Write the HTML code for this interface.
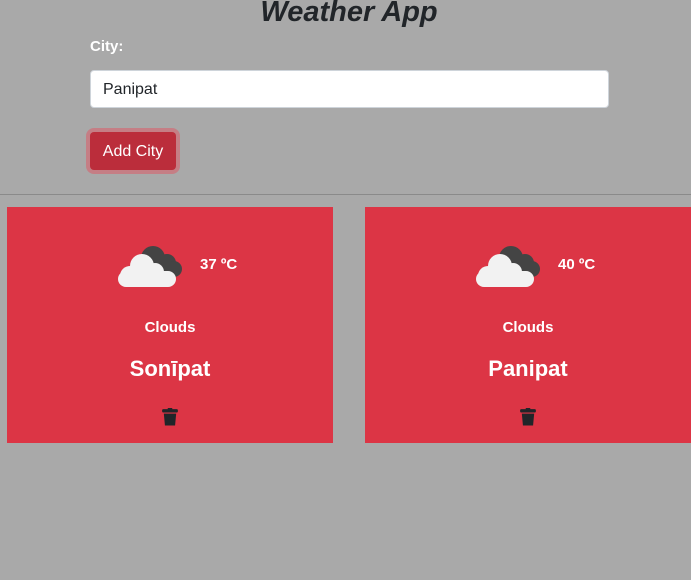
<!DOCTYPE html>
<html><head><style>
body{margin:0;width:691px;height:580px;background:#a9a9a9;font-family:"Liberation Sans",sans-serif;position:relative;overflow:hidden}
.a{position:absolute}
h1{position:absolute;margin:0;left:0;width:698px;text-align:center;top:-4px;font-size:29px;font-style:italic;font-weight:bold;color:#212529}
.lab{left:90px;top:38px;color:#fff;font-weight:bold;font-size:15px}
.inp{left:90px;top:70px;background:#fff;border:1px solid #ced4da;border-radius:4px;font-size:16px;color:#212529;line-height:38px;padding-left:12px;box-sizing:border-box;width:519px;height:38px}
.btn{left:90px;top:132px;width:86px;height:38px;background:#bb2d3b;border-radius:4px;color:#fff;font-size:16px;line-height:40px;text-align:center;box-shadow:0 0 0 4px rgba(225,83,97,.5)}
.hr{left:0;top:194px;width:691px;height:1px;background:#8a8a8a}
.card{top:207px;width:326px;height:236px;background:#dc3545;color:#fff;text-align:center}
.t{position:absolute;top:49px;font-weight:bold;font-size:15px}
.c{position:absolute;top:112px;width:100%;font-weight:bold;font-size:15px}
.n{position:absolute;top:149px;width:100%;font-size:22px;font-weight:bold}
</style></head><body>
<h1>Weather App</h1>
<div class="a lab">City:</div>
<div class="a inp">Panipat</div>
<div class="a btn">Add City</div>
<div class="a hr"></div>
<div class="a card" style="left:7px">
<svg class="a" style="left:107px;top:34px" width="80" height="48" viewBox="0 0 76 48"><g fill="#444"><circle cx="37" cy="17" r="12"/><circle cx="51" cy="22" r="9"/><circle cx="58" cy="28" r="8"/><rect x="30" y="20" width="30" height="16" rx="6"/></g><g fill="#f2f2f2"><circle cx="26" cy="25" r="12"/><circle cx="39" cy="31" r="9"/><circle cx="14" cy="35" r="10"/><rect x="2" y="30" width="58" height="16" rx="8"/></g></svg>
<div class="t" style="left:193px">37 ºC</div>
<div class="c">Clouds</div>
<div class="n">Sonīpat</div>
<svg class="a" style="left:155px;top:201px" width="16" height="18" viewBox="0 0 14 16"><rect x="0" y="1" width="14" height="3" rx="1" fill="#212529"/><rect x="5" y="0" width="4" height="2" fill="#212529"/><path d="M1.5 5h11l-1 10.5h-9z" fill="#212529"/></svg>
</div>
<div class="a card" style="left:365px">
<svg class="a" style="left:107px;top:34px" width="80" height="48" viewBox="0 0 76 48"><g fill="#444"><circle cx="37" cy="17" r="12"/><circle cx="51" cy="22" r="9"/><circle cx="58" cy="28" r="8"/><rect x="30" y="20" width="30" height="16" rx="6"/></g><g fill="#f2f2f2"><circle cx="26" cy="25" r="12"/><circle cx="39" cy="31" r="9"/><circle cx="14" cy="35" r="10"/><rect x="2" y="30" width="58" height="16" rx="8"/></g></svg>
<div class="t" style="left:193px">40 ºC</div>
<div class="c">Clouds</div>
<div class="n">Panipat</div>
<svg class="a" style="left:155px;top:201px" width="16" height="18" viewBox="0 0 14 16"><rect x="0" y="1" width="14" height="3" rx="1" fill="#212529"/><rect x="5" y="0" width="4" height="2" fill="#212529"/><path d="M1.5 5h11l-1 10.5h-9z" fill="#212529"/></svg>
</div>
</body></html>
